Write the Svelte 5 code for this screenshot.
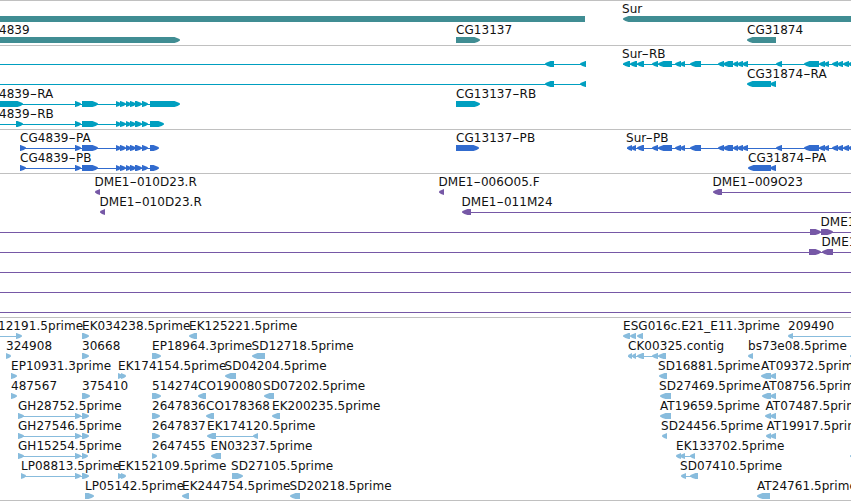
<script>
	const WIDTH = 851;

	// exon: [start, end], lane: { y, line: [start, end] spans, fwd / rev exons, labels: [x, text] }
	const cg4839 = [
		[75, 81],
		[82, 98],
		[116, 121],
		[120, 126],
		[126, 131],
		[130, 136],
		[135, 142],
		[142, 148]
	];

	const sur = [
		[637, 644],
		[652, 658],
		[658, 672],
		[675, 681],
		[680, 685],
		[690, 701],
		[718, 724],
		[723, 733],
		[733, 738],
		[737, 743],
		[742, 748],
		[776, 782],
		[804, 819],
		[819, 825],
		[824, 829],
		[832, 838],
		[837, 843],
		[843, 849],
		[848, 855]
	];

	const ghExons = [
		[18, 24],
		[75, 81]
	];

	const tracks = [
		{
			name: 'genes',
			height: 45,
			lanes: [
				{ y: 19, rev: [[623, 860]], plain: [[0, 585]], labels: [[622, 'Sur']] },
				{
					y: 40,
					fwd: [[-9, 180], [456, 480]],
					rev: [[747, 776]],
					labels: [[-1, '4839'], [456, 'CG13137'], [747, 'CG31874']]
				}
			]
		},
		{
			name: 'transcripts',
			height: 84,
			lanes: [
				{
					y: 19,
					line: [[0, 585], [623, 851]],
					rev: [[545, 554], [580, 586], [623, 630], [630, 637], ...sur],
					labels: [[622, 'Sur-RB']]
				},
				{
					y: 39,
					line: [[0, 585]],
					rev: [[545, 554], [580, 586], [747, 771], [770, 776]],
					labels: [[747, 'CG31874-RA']]
				},
				{
					y: 59,
					line: [[0, 150]],
					fwd: [[-9, 23], ...cg4839, [150, 180], [456, 480]],
					labels: [[-1, '4839-RA'], [456, 'CG13137-RB']]
				},
				{
					y: 79,
					line: [[0, 150]],
					fwd: [[16, 23], ...cg4839, [150, 164]],
					labels: [[-1, '4839-RB']]
				}
			]
		},
		{
			name: 'proteins',
			height: 44,
			lanes: [
				{
					y: 19,
					line: [[20, 150], [627, 851]],
					fwd: [[20, 26], ...cg4839, [150, 159], [456, 479]],
					rev: [[627, 632], [631, 636], ...sur],
					labels: [[20, 'CG4839-PA'], [456, 'CG13137-PB'], [626, 'Sur-PB']]
				},
				{
					y: 39,
					line: [[20, 150]],
					fwd: [[20, 26], ...cg4839, [150, 159]],
					rev: [[748, 771], [770, 776]],
					labels: [[20, 'CG4839-PB'], [748, 'CG31874-PA']]
				}
			]
		},
		{
			name: 'clones',
			height: 144,
			lanes: [
				{
					y: 19,
					line: [[718, 851]],
					rev: [[95, 100], [439, 444], [713, 722]],
					labels: [[94.5, 'DME1-010D23.R'], [438.5, 'DME1-006O05.F'], [712.5, 'DME1-009O23']]
				},
				{
					y: 39,
					line: [[466, 851]],
					rev: [[100, 105], [462, 471]],
					labels: [[99.5, 'DME1-010D23.R'], [461.5, 'DME1-011M24']]
				},
				{ y: 59, line: [[0, 851]], fwd: [[810, 821], [821, 833]], labels: [[820.5, 'DME1']] },
				{
					y: 79,
					line: [[0, 851]],
					fwd: [[809, 821]],
					rev: [[822, 833]],
					labels: [[821.5, 'DME1']]
				},
				{ y: 99, line: [[0, 851]] },
				{ y: 119, line: [[0, 851]] },
				{ y: 139, line: [[0, 851]] }
			]
		},
		{
			name: 'ests',
			height: 183,
			lanes: [
				{
					y: 19,
					line: [[0, 17], [792, 851]],
					fwd: [[16, 22], [82, 89]],
					rev: [[189, 197], [623, 630], [630, 636], [637, 643], [788, 793]],
					labels: [
						[-2, '12191.5prime'],
						[82, 'EK034238.5prime'],
						[189, 'EK125221.5prime'],
						[623, 'ESG016c.E21_E11.3prime'],
						[788, '209490']
					]
				},
				{
					y: 39,
					line: [[628, 666]],
					fwd: [[6, 11], [82, 89], [152, 161]],
					rev: [
						[252, 265],
						[628, 632],
						[632, 636],
						[637, 644],
						[652, 658],
						[658, 666],
						[748, 753],
						[850, 856]
					],
					labels: [
						[6, '324908'],
						[82, '30668'],
						[152, 'EP18964.3prime'],
						[251.5, 'SD12718.5prime'],
						[628, 'CK00325.contig'],
						[748, 'bs73e08.5prime']
					]
				},
				{
					y: 59,
					fwd: [[11, 17], [118, 123], [121, 126]],
					rev: [[225, 236], [659, 667], [761, 771], [770, 776]],
					labels: [
						[11, 'EP10931.3prime'],
						[118, 'EK174154.5prime'],
						[224.5, 'SD04204.5prime'],
						[658, 'SD16881.5prime'],
						[761, 'AT09372.5prime']
					]
				},
				{
					y: 79,
					fwd: [[11, 17], [82, 90], [152, 161]],
					rev: [[198, 206], [264, 274], [660, 671], [762, 771], [770, 776]],
					labels: [
						[11, '487567'],
						[82, '375410'],
						[152, '514274'],
						[198, 'CO190080'],
						[263, 'SD07202.5prime'],
						[659, 'SD27469.5prime'],
						[762, 'AT08756.5prime']
					]
				},
				{
					y: 99,
					line: [[18, 82]],
					fwd: [...ghExons, [82, 89], [152, 160]],
					rev: [[206, 214], [272, 280], [660, 671], [765, 771], [770, 776]],
					labels: [
						[18, 'GH28752.5prime'],
						[152, '2647836'],
						[206, 'CO178368'],
						[272, 'EK200235.5prime'],
						[660, 'AT19659.5prime'],
						[765.5, 'AT07487.5prime']
					]
				},
				{
					y: 119,
					line: [[18, 82], [210, 256]],
					fwd: [...ghExons, [82, 89], [152, 160]],
					rev: [[207, 216], [253, 258], [662, 667], [766, 771], [770, 776]],
					labels: [
						[18, 'GH27546.5prime'],
						[152, '2647837'],
						[207, 'EK174120.5prime'],
						[661, 'SD24456.5prime'],
						[766.5, 'AT19917.5prime']
					]
				},
				{
					y: 139,
					line: [[18, 82], [677, 694]],
					fwd: [...ghExons, [82, 88], [152, 157]],
					rev: [[211, 221], [676, 681], [680, 685], [690, 695], [850, 856]],
					labels: [
						[18, 'GH15254.5prime'],
						[152, '2647455'],
						[210.5, 'EN03237.5prime'],
						[676, 'EK133702.5prime']
					]
				},
				{
					y: 159,
					line: [[21, 82], [682, 695]],
					fwd: [[21, 26], [75, 81], [82, 89], [118, 123], [121, 126], [232, 243]],
					rev: [[681, 686], [690, 698]],
					labels: [
						[21, 'LP08813.5prime'],
						[118, 'EK152109.5prime'],
						[231, 'SD27105.5prime'],
						[680, 'SD07410.5prime']
					]
				},
				{
					y: 179,
					fwd: [[85, 94]],
					rev: [[182, 189], [290, 300], [757, 770]],
					labels: [
						[85, 'LP05142.5prime'],
						[182, 'EK244754.5prime'],
						[289.5, 'SD20218.5prime'],
						[757, 'AT24761.5prime']
					]
				}
			]
		}
	];

	// a box with a bulging pointed end, never longer than the exon itself
	const arrow = ([start, end], y, forward) => {
		const dir = forward ? 1 : -1;
		const head = Math.min(6, end - start);
		const tip = forward ? end : start;
		const back = forward ? start : end;
		const neck = tip - dir * Math.min(head, 5.5);
		const mid = tip - dir * head * 0.4;
		return [
			[back, y - 3],
			[neck, y - 3],
			[mid, y - 1.7],
			[tip, y - 0.4],
			[tip, y + 0.6],
			[mid, y + 1.9],
			[neck, y + 3],
			[back, y + 3]
		].join(' ');
	};
</script>

<main class="browser">
	{#each tracks as track}
		<section class="track {track.name}">
			<svg width={WIDTH} height={track.height - 1} viewBox="0 1 {WIDTH} {track.height - 1}">
				{#each track.lanes as lane}
					{#each lane.line ?? [] as [start, end]}
						<rect x={start} y={lane.y} width={end - start} height="1" />
					{/each}
					{#each lane.plain ?? [] as [start, end]}
						<rect x={start} y={lane.y - 3} width={end - start} height="6" />
					{/each}
					{#each lane.fwd ?? [] as exon}
						<polygon points={arrow(exon, lane.y, true)} />
					{/each}
					{#each lane.rev ?? [] as exon}
						<polygon points={arrow(exon, lane.y, false)} />
					{/each}
					{#each lane.labels ?? [] as [x, text]}
						{@const [id, suffix] = text.split('-')}
						<text {x} y={lane.y - 6}
							>{id}{#if suffix}<tspan textLength="7.4" lengthAdjust="spacingAndGlyphs">-</tspan
								>{suffix}{/if}</text
						>
					{/each}
				{/each}
			</svg>
		</section>
	{/each}
</main>

<style>
	:global(body) {
		background: #fff;
	}

	.browser {
		width: 851px;
		height: 501px;
		box-sizing: border-box;
		overflow: hidden;
		border-bottom: 1px solid #c0c0c0;
		background: #fff;
	}

	.track {
		border-top: 1px solid #c0c0c0;
	}

	.genes {
		fill: #408d93;
	}
	.transcripts {
		fill: #009fc0;
	}
	.proteins {
		fill: #316bce;
	}
	.clones {
		fill: #7658a6;
	}
	.ests {
		fill: #88bcdd;
	}

	svg {
		display: block;
		overflow: hidden;
	}

	text {
		fill: #111;
		font-family: 'DejaVu Sans', sans-serif;
		font-size: 12px;
		letter-spacing: 0.05px;
	}
</style>
